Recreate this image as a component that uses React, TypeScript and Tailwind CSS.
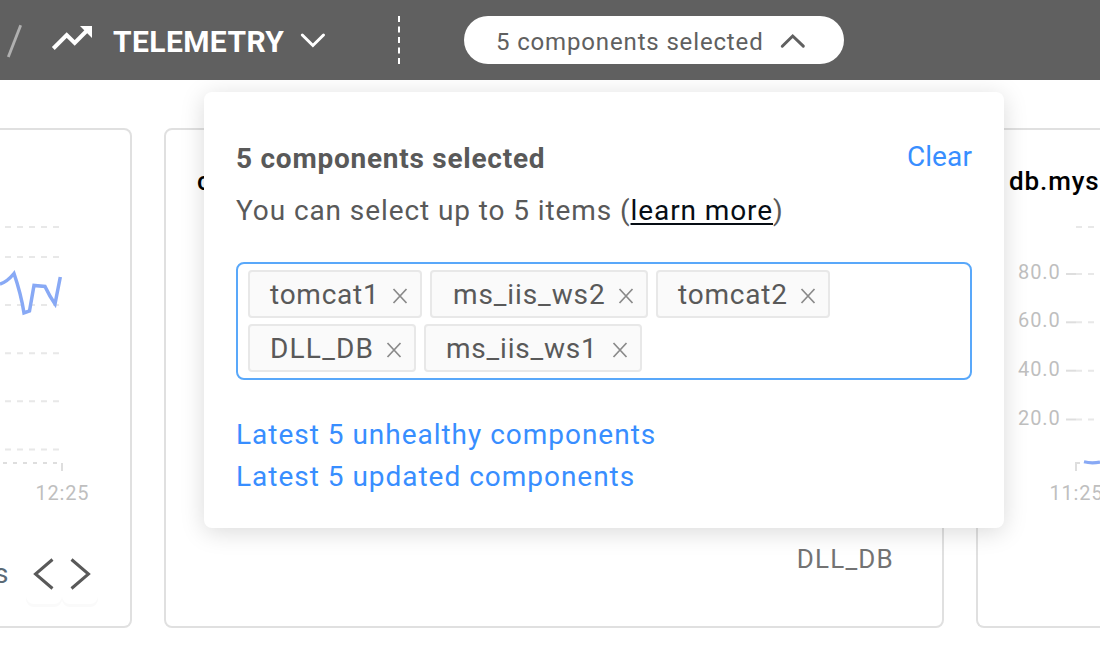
import React from "react";

function Header() {
  return (
    <header className="relative z-20 flex h-20 shrink-0 items-center bg-[#606060] text-white">
      <svg className="h-20 w-[113px] shrink-0" viewBox="0 0 113 80" fill="none">
        <path d="M8.3 57 20.7 25.3" stroke="#b0b0b0" strokeWidth="2.8" />
        <path d="M53.3 48.5 66.7 35 74.7 43 88 29.5" stroke="#fff" strokeWidth="4" />
        <path d="M80 26H92V38Z" fill="#fff" />
      </svg>
      <span className="w-[187px] shrink-0 pt-1 text-[30px] leading-[40px] font-bold tracking-[0.4px]">TELEMETRY</span>
      <svg className="h-4 w-[26px] shrink-0" viewBox="0 0 26 16" fill="none">
        <path d="M2.3 3 12.9 13.5 23.5 3" stroke="#fff" strokeWidth="3" strokeLinecap="round" />
      </svg>
      <svg className="ml-[72px] h-12 w-0.5 shrink-0" viewBox="0 0 2 48">
        <path d="M1 0V48" stroke="#fff" strokeWidth="2" strokeDasharray="6 4.5" />
      </svg>
      <button className="ml-16 flex h-12 w-[380px] shrink-0 items-center rounded-full bg-white pl-8 text-[#606060]">
        <span className="w-[284px] pt-1 text-left text-[24px] leading-[30px] tracking-[0.85px] whitespace-nowrap">5 components selected</span>
        <svg className="mt-0.5 h-4 w-[26px]" viewBox="0 0 26 16" fill="none">
          <path d="M2.3 13.2 12.7 3 23.3 13.2" stroke="#606060" strokeWidth="3" strokeLinecap="round" />
        </svg>
      </button>
    </header>
  );
}

function Tag({ label, className }: { label: string; className: string }) {
  return (
    <span className={`flex h-12 items-center justify-between rounded-[4px] border-2 border-[#e8e8e8] bg-[#fafafa] pr-3 pl-5 ${className}`}>
      <span className="pt-0.5 text-[28px] leading-[40px] whitespace-nowrap">{label}</span>
      <svg className="mt-1 h-4 w-4 shrink-0" viewBox="0 0 16 16">
        <path d="M1.5 1 14.5 15M14.5 1 1.5 15" stroke="#8a8a8a" strokeWidth="1.7" />
      </svg>
    </span>
  );
}

function Popover() {
  return (
    <div className="absolute top-3 left-[204px] z-10 flex h-[436px] w-[800px] flex-col rounded-lg bg-white px-8 text-[28px] text-[#595959] shadow-[0_4px_24px_rgba(0,0,0,0.15)]">
      <div className="mt-[47px] flex h-10 items-start justify-between leading-[40px]">
        <h2 className="font-bold tracking-[0.75px]">5 components selected</h2>
        <a className="-mt-0.5 tracking-[0.1px] text-[#388eff]">Clear</a>
      </div>
      <p className="mt-3 h-10 leading-[40px] tracking-[0.91px] whitespace-nowrap">
        You can select up to 5 items (<a className="text-[#060d14] underline decoration-2 underline-offset-[3px]">learn more</a>)
      </p>
      <div className="mt-[31px] flex h-[118px] shrink-0 flex-wrap content-start gap-x-2 gap-y-1.5 rounded-lg border-2 border-[#59a8fa] px-2.5 py-1.5">
        <Tag label="tomcat1" className="w-[174px] tracking-[0.75px]" />
        <Tag label="ms_iis_ws2" className="w-[218px] pl-[21px] tracking-[0.9px]" />
        <Tag label="tomcat2" className="w-[174px] tracking-[0.8px]" />
        <Tag label="DLL_DB" className="w-[168px] tracking-[1.2px]" />
        <Tag label="ms_iis_ws1" className="w-[218px] tracking-[0.8px]" />
      </div>
      <div className="mt-[34px] flex flex-col items-start leading-[42px] tracking-[0.98px] text-[#388eff]">
        <a>Latest 5 unhealthy components</a>
        <a>Latest 5 updated components</a>
      </div>
    </div>
  );
}

function LeftCard() {
  return (
    <section className="flex h-[500px] w-[132px] shrink-0 flex-col overflow-hidden rounded-r-lg border-y-2 border-r-2 border-[#e0e0e0]">
      <svg className="h-[390px] w-[130px] shrink-0" viewBox="0 130 130 390" fill="none">
        {[227, 257, 305, 353.3, 401.3, 449.5].map((y) => (
          <path key={y} d={`M5 ${y}H60`} stroke="#e8e8e8" strokeWidth="2" strokeDasharray="6 6" />
        ))}
        <path d="M3 463H59" stroke="#dedede" strokeWidth="2" strokeDasharray="4 6" />
        <path d="M62 463V471" stroke="#dedede" strokeWidth="2" />
        <path d="M0 284Q7 282 14 273.5Q21 294 24 313L29.5 311 34 285.5 45 286.5Q50 297 55 304L60.3 277" stroke="#88a9f5" strokeWidth="3.5" />
        <text x="35.5" y="500" className="fill-[#bfbfbf] text-[20px] tracking-[0.8px]">12:25</text>
      </svg>
      <div className="flex h-[108px] w-[130px] items-center">
        <span className="-ml-[6px] w-8 pt-px text-[28px] text-[#5b6a76]">s</span>
        <button className="flex h-[61px] w-9 items-center justify-center rounded-lg shadow-[0_3px_0_#fafafa]">
          <svg className="mt-0.5 h-8 w-6" viewBox="0 0 24 32" fill="none"><path d="M20.5 1.5 3.5 16 20.5 30.5" stroke="#595959" strokeWidth="3" /></svg>
        </button>
        <button className="flex h-[61px] w-9 items-center justify-center rounded-lg shadow-[0_3px_0_#fafafa]">
          <svg className="mt-0.5 h-8 w-6" viewBox="0 0 24 32" fill="none"><path d="M3.5 1.5 20.5 16 3.5 30.5" stroke="#595959" strokeWidth="3" /></svg>
        </button>
      </div>
    </section>
  );
}

const ticks = [
  { label: "80.0", y: 274 },
  { label: "60.0", y: 322.3 },
  { label: "40.0", y: 370.7 },
  { label: "20.0", y: 419.5 },
];

function RightCard() {
  return (
    <section className="flex h-[500px] w-[124px] shrink-0 flex-col overflow-hidden rounded-l-lg border-y-2 border-l-2 border-[#e0e0e0]">
      <h3 className="mt-[31px] ml-[31px] h-10 shrink-0 text-[26px] leading-[40px] font-medium tracking-[0.9px] whitespace-nowrap text-black">db.mys</h3>
      <svg className="h-[310px] w-[122px] shrink-0" viewBox="978 201 122 310" fill="none">
        <path d="M1076 227H1100" stroke="#e8e8e8" strokeWidth="2" strokeDasharray="6 6" />
        {ticks.map(({ label, y }) => (
          <g key={label}>
            <text x="1018" y={y + 5} className="fill-[#bfbfbf] text-[20px] tracking-[0.9px]">{label}</text>
            <path d={`M1066 ${y}H1076`} stroke="#dedede" strokeWidth="2" />
            <path d={`M1076 ${y}H1100`} stroke="#e8e8e8" strokeWidth="2" strokeDasharray="6 6" />
          </g>
        ))}
        <path d="M1076 471V463H1080" stroke="#dedede" strokeWidth="2" />
        <path d="M1084 461.8Q1092 463.8 1100 462" stroke="#88a9f5" strokeWidth="3.2" />
        <text x="1049.5" y="500" className="fill-[#bfbfbf] text-[20px] tracking-[0.8px]">11:25</text>
      </svg>
    </section>
  );
}

export default function App() {
  return (
    <div className="flex h-[658px] w-[1100px] flex-col overflow-hidden bg-white font-[Roboto,sans-serif]">
      <Header />
      <main className="relative flex gap-8 pt-12">
        <LeftCard />
        <section className="flex h-[500px] w-[780px] shrink-0 flex-col justify-between rounded-lg border-2 border-[#e0e0e0] pt-[31px] pr-[30px] pb-[47px] pl-[31px]">
          <h3 className="text-[26px] leading-[40px] font-medium tracking-[0.9px] text-black">cpu</h3>
          <span className="mr-[18px] self-end text-[26px] leading-[40px] tracking-[1.2px] text-[#737373]">DLL_DB</span>
        </section>
        <RightCard />
        <Popover />
      </main>
    </div>
  );
}
